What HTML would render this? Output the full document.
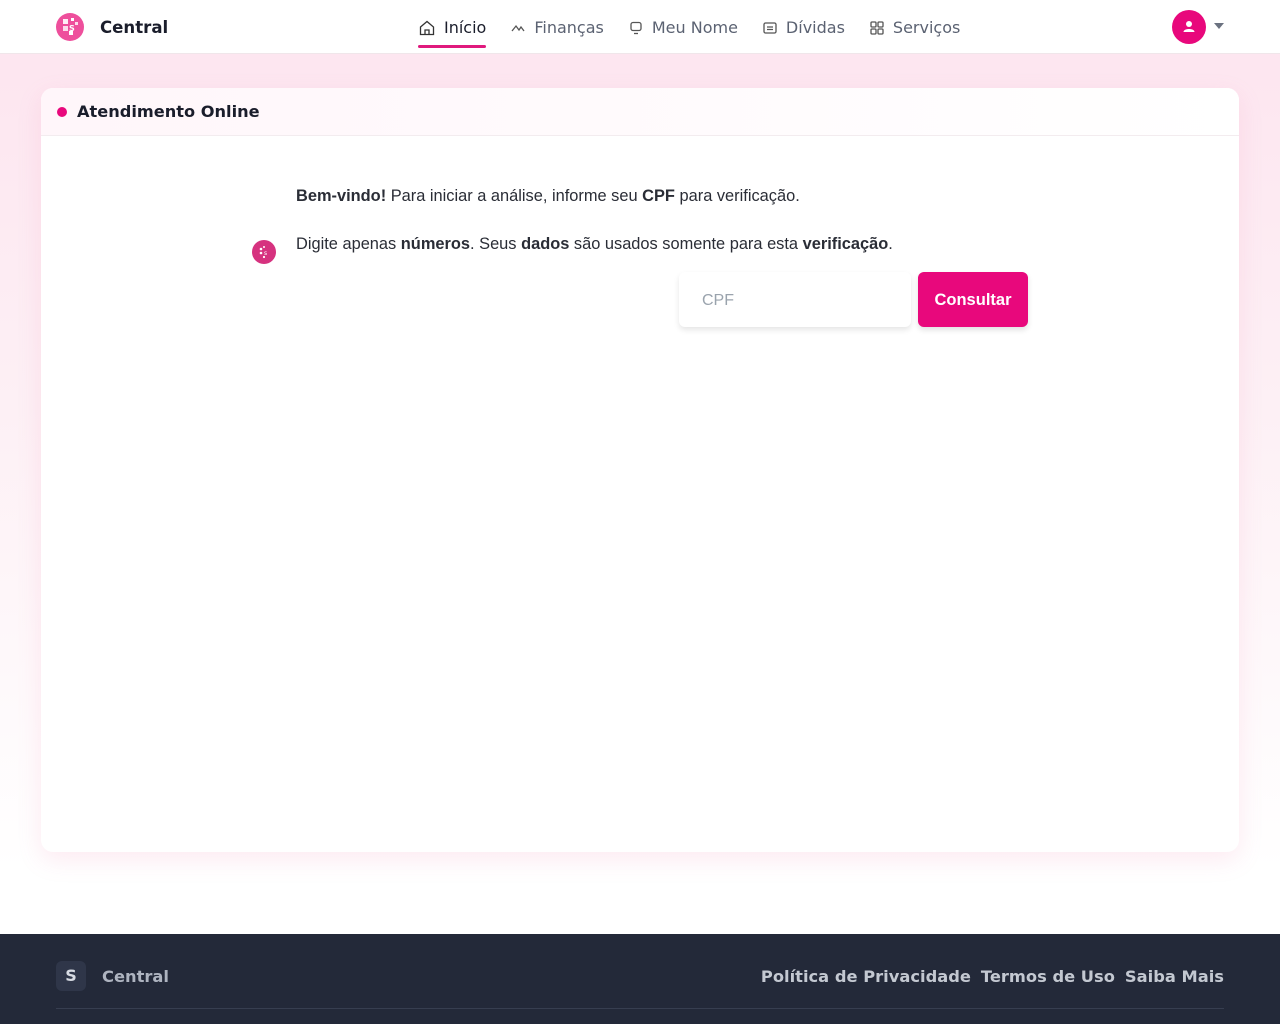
<!DOCTYPE html>
<html><head><meta charset="utf-8"><style>
*{box-sizing:border-box;margin:0;padding:0}
body{width:1280px;height:1024px;overflow:hidden;font-family:"DejaVu Sans",sans-serif;background:linear-gradient(180deg,#fde4ef 0%,#fdf0f5 40%,#fff 85%);position:relative}
.nav{position:absolute;top:0;left:0;width:1280px;height:54px;background:#fff;border-bottom:1px solid #f0e6ea}
.logo{position:absolute;left:56px;top:13px;width:28px;height:28px;border-radius:50%;background:#ee4f9c}
.brand{position:absolute;left:100px;top:18px;font-weight:bold;font-size:16.6px;color:#1a1d2b}
.links{position:absolute;left:418px;top:18px;font-size:16px;color:#5b6272;display:flex}
.links span{margin-right:24px;display:flex;align-items:center;gap:8px}
.links .act{color:#1a1d2b;position:relative}
.links .act:after{content:"";position:absolute;left:0;right:0;top:27px;height:3px;border-radius:2px;background:#e0197d}
.avatar{position:absolute;left:1172px;top:10px;width:34px;height:34px;border-radius:50%;background:#e8087c}
.caret{position:absolute;left:1214px;top:23px;border:5px solid transparent;border-top:6px solid #6b7280}
.card{position:absolute;left:41px;top:88px;width:1198px;height:764px;background:#fff;border-radius:12px;box-shadow:0 8px 24px rgba(240,120,170,.15)}
.ch{height:48px;border-bottom:1px solid #f3ecef;background:linear-gradient(90deg,#fff6fa,#fff);border-radius:12px 12px 0 0;position:relative}
.ch .dot{position:absolute;left:16px;top:19px;width:10px;height:10px;border-radius:50%;background:#e8087c}
.ch b{position:absolute;left:36px;top:14px;font-size:16.2px;color:#1a1d2b}
.msg{position:absolute;left:255px;font-family:"Liberation Sans",sans-serif;font-size:16.4px;color:#2a2d36}
.bot{position:absolute;left:211px;top:152px;width:24px;height:24px;border-radius:50%;background:#d6327f}
.inp{position:absolute;left:638px;top:184px;width:232px;height:55px;background:#fff;border-radius:6px;box-shadow:0 3px 6px rgba(0,0,0,.1);font-family:"Liberation Sans",sans-serif;font-size:16px;color:#9aa3ad;padding:20px 0 0 23px}
.btn{position:absolute;left:877px;top:184px;width:110px;height:55px;background:#e8087c;border-radius:6px;box-shadow:0 3px 6px rgba(0,0,0,.12);color:#fff;font-family:"Liberation Sans",sans-serif;font-weight:bold;font-size:16.5px;text-align:center;line-height:57px}
.foot{position:absolute;left:0;top:934px;width:1280px;height:90px;background:#232939}
.fs{position:absolute;left:56px;top:27px;width:30px;height:30px;border-radius:6px;background:#2f3649;color:#d7dbe3;font-weight:bold;font-size:16px;text-align:center;line-height:30px}
.fb{position:absolute;left:102px;top:33px;font-weight:bold;font-size:16.3px;color:#aeb4c0}
.fl{position:absolute;right:56px;top:33px;font-weight:bold;font-size:16.3px;color:#c3c8d1}
.fl span{margin-left:10px}
.fline{position:absolute;left:56px;right:56px;top:74px;height:1px;background:#373e50}
</style></head><body>
<div class="nav">
<div class="logo"><svg width="28" height="28" viewBox="0 0 28 28"><rect x="7" y="6" width="5" height="5" fill="#fff" opacity=".9"/><rect x="7" y="13" width="5" height="5" fill="#fff" opacity=".8"/><rect x="13" y="18" width="4" height="4" fill="#fff"/><rect x="15" y="5" width="3" height="3" fill="#fff"/><rect x="19" y="9" width="3" height="3" fill="#fff" opacity=".8"/><text x="13" y="18" font-size="8" fill="#fff" font-family="DejaVu Sans" font-weight="bold">S</text></svg></div>
<div class="brand">Central</div>
<div class="links">
<span class="act"><svg width="18" height="18" viewBox="0 0 18 18" fill="none" stroke="#333" stroke-width="1.3"><path d="M2.5 8L9 2.5 15.5 8V15.5H2.5Z"/><path d="M7 15.5V11h4v4.5"/></svg>Início</span>
<span><svg width="16" height="16" viewBox="0 0 16 16" fill="none" stroke="#555" stroke-width="1.3"><path d="M2 11l4-5 3 4 2-3 3 4"/></svg>Finanças</span>
<span><svg width="16" height="16" viewBox="0 0 16 16" fill="none" stroke="#555" stroke-width="1.3"><rect x="3" y="2.5" width="10" height="8" rx="2"/><path d="M6 13.5h4"/></svg>Meu Nome</span>
<span><svg width="16" height="16" viewBox="0 0 16 16" fill="none" stroke="#555" stroke-width="1.3"><rect x="2" y="3" width="12" height="10" rx="1.5"/><path d="M5 7h6M5 9.5h6"/></svg>Dívidas</span>
<span><svg width="16" height="16" viewBox="0 0 16 16" fill="none" stroke="#555" stroke-width="1.3"><rect x="2" y="2" width="5" height="5" rx="1"/><rect x="9" y="2" width="5" height="5" rx="1"/><rect x="2" y="9" width="5" height="5" rx="1"/><rect x="9" y="9" width="5" height="5" rx="1"/></svg>Serviços</span>
</div>
<div class="avatar"><svg width="34" height="34" viewBox="0 0 34 34"><circle cx="17" cy="14" r="3" fill="#fff"/><path d="M11.5 22c0-4 11-4 11 0z" fill="#fff"/></svg></div>
<div class="caret"></div>
</div>
<div class="card">
<div class="ch"><div class="dot"></div><b>Atendimento Online</b></div>
<div class="msg" style="top:99px"><b>Bem-vindo!</b> Para iniciar a análise, informe seu <b>CPF</b> para verificação.</div>
<div class="msg" style="top:147px">Digite apenas <b>números</b>. Seus <b>dados</b> são usados somente para esta <b>verificação</b>.</div>
<div class="bot"><svg width="24" height="24" viewBox="0 0 24 24"><circle cx="9" cy="9" r="1.3" fill="#fff"/><circle cx="9" cy="13" r="1.3" fill="#fff"/><circle cx="12" cy="7" r="1" fill="#fff"/><circle cx="12" cy="17" r="1.1" fill="#fff"/><text x="12" y="15" font-size="6" fill="#fff" font-family="DejaVu Sans">s</text></svg></div>
<div class="inp">CPF</div>
<div class="btn">Consultar</div>
</div>
<div class="foot">
<div class="fs">S</div><div class="fb">Central</div>
<div class="fl">Política de Privacidade<span>Termos de Uso</span><span>Saiba Mais</span></div>
<div class="fline"></div>
</div>
</body></html>
